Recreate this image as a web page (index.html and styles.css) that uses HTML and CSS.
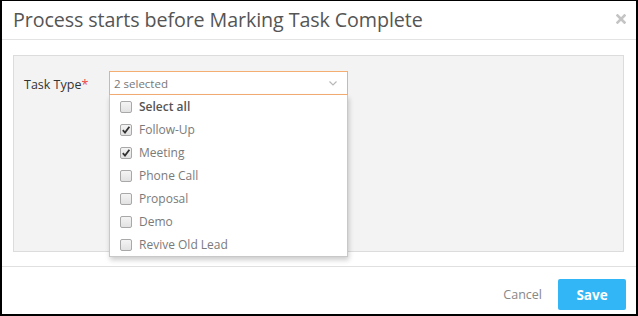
FILE: index.html
```html
<!DOCTYPE html>
<html>
<head>
<meta charset="utf-8">
<link rel="stylesheet" href="styles.css">
</head>
<body>
<div class="dialog">
  <div class="header">
    <h1 class="title">Process starts before Marking Task Complete</h1>
    <span class="close"><svg width="10" height="10" viewBox="0 0 10 10"><path d="M1.5 1.5 L8.5 8.5 M8.5 1.5 L1.5 8.5" stroke="#c4c4c4" stroke-width="2.6" stroke-linecap="square"/></svg></span>
  </div>
  <div class="body">
    <div class="panel">
      <div class="field">
        <label class="label">Task Type<span class="req">*</span></label>
        <div class="select-wrap">
          <div class="select">
            <span class="value">2 selected</span>
            <svg class="chev" width="8" height="5" viewBox="0 0 8 5"><path d="M0.5 0.5 L4 4 L7.5 0.5" fill="none" stroke="#b8b8b8" stroke-width="1.2"/></svg>
          </div>
          <ul class="menu">
            <li class="item all"><span class="cb"></span>Select all</li>
            <li class="item"><span class="cb on"><svg width="10" height="10" viewBox="0 0 10 10"><path d="M1.8 5.2 L4 7.6 L8.4 1.8" fill="none" stroke="#333" stroke-width="1.8"/></svg></span>Follow-Up</li>
            <li class="item"><span class="cb on"><svg width="10" height="10" viewBox="0 0 10 10"><path d="M1.8 5.2 L4 7.6 L8.4 1.8" fill="none" stroke="#333" stroke-width="1.8"/></svg></span>Meeting</li>
            <li class="item"><span class="cb"></span>Phone Call</li>
            <li class="item"><span class="cb"></span>Proposal</li>
            <li class="item"><span class="cb"></span>Demo</li>
            <li class="item"><span class="cb"></span>Revive Old Lead</li>
          </ul>
        </div>
      </div>
    </div>
  </div>
  <div class="footer">
    <button class="btn cancel">Cancel</button>
    <button class="btn save">Save</button>
  </div>
</div>
</body>
</html>
```
FILE: styles.css
```css
* { box-sizing: border-box; }
html, body { margin: 0; padding: 0; }
body {
  font-family: "Open Sans", "Noto Sans", sans-serif;
  background: #fff;
}
.dialog {
  width: 638px;
  height: 316px;
  border-style: solid;
  border-color: #000;
  border-width: 1px 2px 2px 2px;
  display: flex;
  flex-direction: column;
  background: #fff;
}
.header {
  height: 39px;
  border-bottom: 1px solid #e3e3e3;
  display: flex;
  align-items: center;
  justify-content: space-between;
  padding: 0 10px 0 11px;
}
.title {
  margin: 0;
  font-size: 19.7px;
  font-weight: 400;
  color: #555;
  letter-spacing: -0.1px;
  padding-bottom: 2px;
}
.close { display: flex; margin-top: -2px; margin-right: 0; }
.body {
  height: 227px;
  padding: 15px 12px 0 11px;
  border-bottom: 1px solid #e0e0e0;
}
.panel {
  height: 197px;
  background: #f3f3f3;
  border: 1px solid #dcdcdc;
  padding: 15px 10px 0 10px;
}
.field { display: flex; align-items: flex-start; }
.label {
  width: 85px;
  font-size: 12.5px;
  color: #333;
  line-height: 24px;
  padding-top: 2px;
}
.req { color: #e8474a; }
.select-wrap { position: relative; width: 239px; }
.select {
  height: 24px;
  border: 1px solid #f5ae72;
  background: #fff;
  display: flex;
  align-items: center;
  justify-content: space-between;
  padding: 0 10px 0 4px;
}
.value { font-size: 11.5px; color: #777; }
.chev { margin-top: 1px; }
.menu {
  position: absolute;
  left: 0;
  top: 24px;
  width: 239px;
  margin: 0;
  padding: 0;
  list-style: none;
  background: #fff;
  border: 1px solid #c8c8c8;
  border-top: none;
  box-shadow: 1px 3px 5px rgba(0,0,0,0.2);
}
.item {
  height: 23px;
  display: flex;
  align-items: center;
  padding-left: 10px;
  font-size: 12px;
  color: #7a7a7a;
}
.item.all { color: #555; font-weight: 600; }
.cb {
  width: 12px;
  height: 12px;
  border: 1px solid #a8a8a8;
  border-radius: 2px;
  background: linear-gradient(#f4f4f4, #e2e2e2);
  margin-right: 7px;
  display: flex;
  align-items: center;
  justify-content: center;
}
.footer {
  flex: 1;
  display: flex;
  justify-content: flex-end;
  align-items: flex-start;
  padding: 12px 10px 0 0;
}
.btn {
  font-family: "Open Sans", "Noto Sans", sans-serif;
  border: none;
  cursor: pointer;
  height: 31px;
}
.cancel {
  background: none;
  color: #888;
  font-size: 12.5px;
  padding: 0 16px 0 0;
}
.save {
  width: 68px;
  background: #33b6f6;
  color: #fff;
  font-weight: 700;
  font-size: 13.5px;
  border-radius: 2px;
}
```
